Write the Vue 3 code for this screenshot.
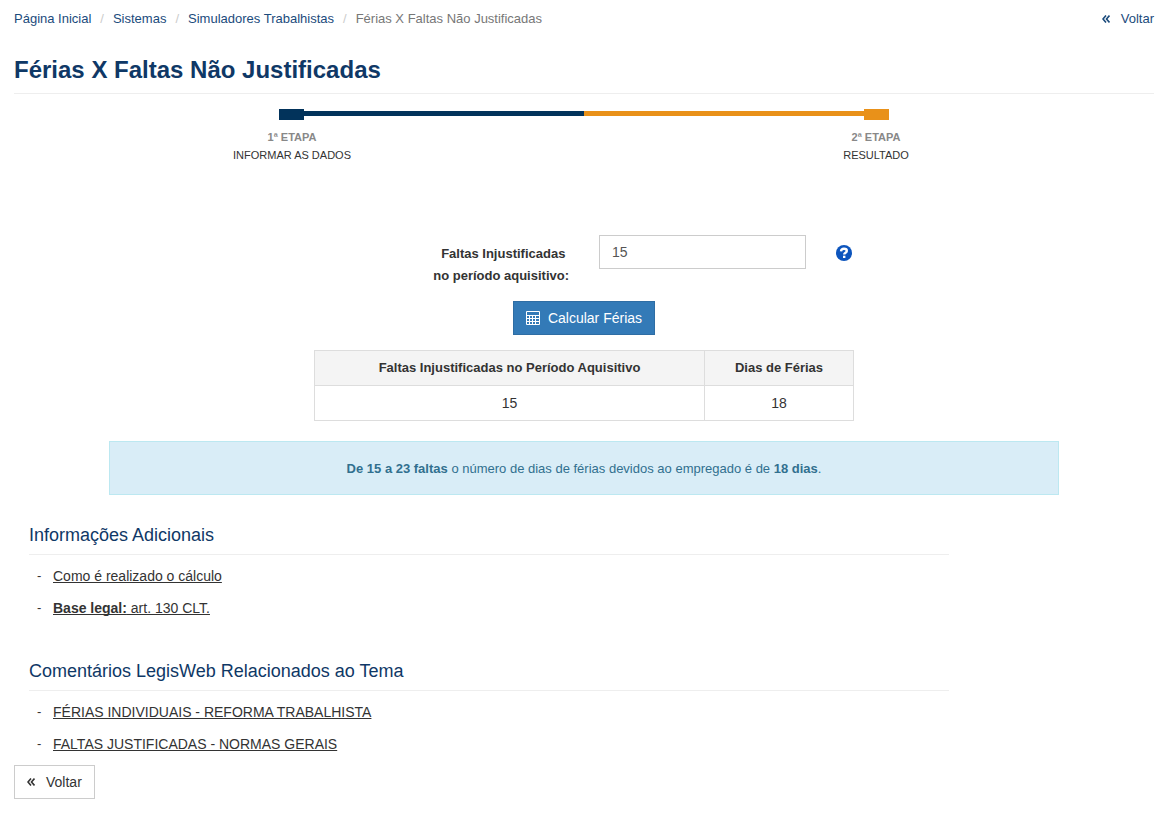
<script setup>
import { ref } from 'vue'

const absences = ref('15')
const trail = ['Página Inicial', 'Sistemas', 'Simuladores Trabalhistas']
const comments = [
  'FÉRIAS INDIVIDUAIS - REFORMA TRABALHISTA',
  'FALTAS JUSTIFICADAS - NORMAS GERAIS',
]
</script>

<template>
  <main class="page">
    <header class="top">
      <nav aria-label="Navegação">
        <ol class="trail">
          <li v-for="item in trail" :key="item"><a href="#">{{ item }}</a></li>
          <li class="current" aria-current="page">Férias X Faltas Não Justificadas</li>
        </ol>
      </nav>
      <a class="back-link" href="#">
        <svg class="chevrons" viewBox="0 0 8 8" aria-hidden="true"><path d="M4 .5 1 4l3 3.500M7.500 .5 4.500 4l3 3.500" /></svg>
        <span>Voltar</span>
      </a>
    </header>

    <h1>Férias X Faltas Não Justificadas</h1>

    <section class="steps" aria-label="Etapas">
      <div class="track">
        <span class="knob first"></span>
        <span class="line first"></span>
        <span class="line second"></span>
        <span class="knob second"></span>
      </div>
      <ol class="step-names">
        <li><strong>1ª ETAPA</strong><span>INFORMAR AS DADOS</span></li>
        <li><strong>2ª ETAPA</strong><span>RESULTADO</span></li>
      </ol>
    </section>

    <form class="form" @submit.prevent>
      <div class="field">
        <label for="absences">Faltas Injustificadas&nbsp;<br />no período aquisitivo:</label>
        <input id="absences" v-model="absences" type="text" />
        <button class="help" type="button" aria-label="Ajuda">
          <svg viewBox="0 0 16 16" aria-hidden="true">
            <circle cx="8" cy="8" r="8" fill="#0d55bd" />
            <path d="M5 6.300C5.200 4.500 6.400 3.800 8 3.800c1.700 0 2.800.8 2.800 2.100 0 1.800-2.600 1.700-2.600 3.600" fill="none" stroke="#fff" stroke-width="2.400" />
            <path d="M7 10.700h2.400v2.300H7z" fill="#fff" />
          </svg>
        </button>
      </div>
      <button class="submit" type="submit">
        <svg viewBox="0 0 14 14" aria-hidden="true">
          <path d="M.5 .5h13v13H.5zM.5 4.500h13M3.500 5v8M6.500 5v8M9.500 5v8M1 7.500h12M1 10.500h12" fill="none" stroke="#fff" />
        </svg>
        <span>Calcular Férias</span>
      </button>
    </form>

    <table class="result">
      <thead>
        <tr><th scope="col">Faltas Injustificadas no Período Aquisitivo</th><th scope="col" class="days">Dias de Férias</th></tr>
      </thead>
      <tbody>
        <tr><td>15</td><td>18</td></tr>
      </tbody>
    </table>

    <p class="notice"><strong>De 15 a 23 faltas</strong> o número de dias de férias devidos ao empregado é de <strong>18 dias</strong>.</p>

    <section class="info">
      <h2>Informações Adicionais</h2>
      <ul>
        <li><a href="#">Como é realizado o cálculo</a></li>
        <li><a href="#"><strong>Base legal:</strong> art. 130 CLT.</a></li>
      </ul>
    </section>

    <section class="info">
      <h2>Comentários LegisWeb Relacionados ao Tema</h2>
      <ul>
        <li v-for="item in comments" :key="item"><a href="#">{{ item }}</a></li>
      </ul>
    </section>

    <button class="back" type="button">
      <svg class="chevrons" viewBox="0 0 8 8" aria-hidden="true"><path d="M4 .5 1 4l3 3.500M7.500 .5 4.500 4l3 3.500" /></svg>
      <span>Voltar</span>
    </button>
  </main>
</template>

<style>
body {
  background: #fff;
}
</style>

<style scoped>
.page {
  box-sizing: border-box;
  padding: 9px 11px 16px 14px;
  color: #333;
  font: 14px/20px "Liberation Sans", Arial, sans-serif;
}
.page * {
  box-sizing: border-box;
}
button,
input {
  font: inherit;
}
ol,
ul {
  margin: 0;
  padding: 0;
  list-style: none;
}
.top {
  display: flex;
  justify-content: space-between;
  font-size: 13px;
}
.trail {
  display: flex;
}
.trail li + li::before {
  padding: 0 9px;
  color: #ccc;
  content: "/";
}
.top a {
  color: #1b4b7c;
  text-decoration: none;
}
.trail .current {
  color: #777;
}
.back-link,
.back {
  display: flex;
  align-items: center;
  gap: 11px;
}
.chevrons {
  width: 8px;
  height: 8px;
  fill: none;
  stroke: currentColor;
  stroke-width: 1.600;
}
h1 {
  margin: 25px 0 0;
  padding-bottom: 7px;
  border-bottom: 1px solid #eee;
  color: #0f3866;
  font-size: 24px;
  line-height: 32px;
}
.steps {
  width: 700px;
  max-width: 100%;
  margin: 15px auto 0;
}
.track {
  display: flex;
  align-items: flex-start;
  margin: 0 45px;
}
.knob {
  width: 25px;
  height: 11px;
}
.line {
  flex: 1;
  height: 5px;
  margin-top: 2px;
}
.first {
  background: #02335b;
}
.second {
  background: #e99119;
}
.step-names {
  display: flex;
  justify-content: space-between;
  margin-top: 8px;
  font-size: 11px;
  line-height: 18px;
  text-align: center;
}
.step-names li {
  display: flex;
  flex-direction: column;
  align-items: center;
  width: 116px;
  white-space: nowrap;
}
.step-names strong {
  color: #888;
}
.form {
  display: flex;
  flex-direction: column;
  align-items: center;
  margin-top: 71px;
}
.field {
  display: grid;
  grid-template-columns: 1fr 207px 1fr;
  column-gap: 30px;
  width: 100%;
  padding-left: 237px;
  margin-bottom: 14px;
}
label {
  padding-top: 8px;
  font-size: 13px;
  font-weight: bold;
  line-height: 22px;
  text-align: right;
}
input {
  height: 34px;
  padding: 6px 12px;
  border: 1px solid #ccc;
  background: #fff;
  color: #555;
}
.help {
  width: 16px;
  height: 16px;
  margin-top: 10px;
  padding: 0;
  border: 0;
  background: none;
}
.help svg {
  display: block;
}
.submit {
  display: flex;
  align-items: center;
  gap: 8px;
  height: 34px;
  padding: 0 12px;
  border: 1px solid #2e6da4;
  background: #337ab7;
  color: #fff;
}
.submit svg {
  width: 14px;
  height: 14px;
}
.result {
  width: 540px;
  max-width: 100%;
  margin: 15px auto 0;
  border-collapse: collapse;
  text-align: center;
}
.result th,
.result td {
  height: 35px;
  padding: 0 8px;
  border: 1px solid #ddd;
}
.result th {
  background: #f4f4f4;
  font-size: 13px;
}
.days {
  width: 149px;
}
.notice {
  width: 950px;
  max-width: 100%;
  margin: 20px auto 0;
  padding: 17px 15px 15px;
  border: 1px solid #bce8f1;
  background: #d9edf7;
  color: #31708f;
  font-size: 13px;
  text-align: center;
}
.info {
  width: 920px;
  max-width: 100%;
  margin: 29px 15px 0;
}
.info + .info {
  margin-top: 36px;
}
h2 {
  margin: 0 0 5px;
  padding-bottom: 8px;
  border-bottom: 1px solid #eee;
  color: #0f3866;
  font-size: 18px;
  font-weight: 500;
  line-height: 22px;
}
.info li {
  display: flex;
  line-height: 32px;
}
.info li::before {
  width: 16px;
  margin-left: 8px;
  font-size: 13px;
  content: "-";
}
.info a {
  color: #333;
  text-decoration-skip-ink: none;
}
.back {
  height: 34px;
  margin-top: 5px;
  padding: 0 12px;
  border: 1px solid #ccc;
  background: #fff;
  color: #333;
}
</style>
